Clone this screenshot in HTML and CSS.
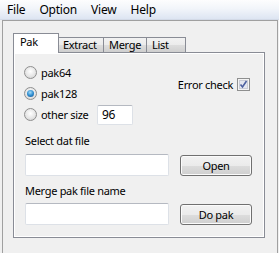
FILE: index.html
```html
<!DOCTYPE html>
<html lang="en">
<head>
    <meta charset="UTF-8">
    <title>Pak tool</title>
    <link rel="stylesheet" href="styles.css">
</head>
<body>
    <!-- Menu bar -->
    <div class="menubar">
        <span class="menu-item">File</span>
        <span class="menu-item">Option</span>
        <span class="menu-item">View</span>
        <span class="menu-item">Help</span>
    </div>

    <div class="window">
        <div class="tabstrip">
            <div class="tab tab-pak active">Pak</div>
            <div class="tab tab-extract">Extract</div>
            <div class="tab tab-merge">Merge</div>
            <div class="tab tab-list">List</div>
        </div>

        <div class="panel">
            <div class="options">
                <div class="radios">
                    <div class="radio-row">
                        <span class="radio"></span>
                        <span class="radio-label">pak64</span>
                    </div>
                    <div class="radio-row">
                        <span class="radio checked"></span>
                        <span class="radio-label">pak128</span>
                    </div>
                    <div class="radio-row">
                        <span class="radio"></span>
                        <span class="radio-label size-label">other size</span>
                        <div class="textbox small">96</div>
                    </div>
                </div>

                <div class="errcheck">
                    <span>Error check</span>
                    <svg class="checkbox" width="13" height="13" viewBox="0 0 13 13">
                        <rect x="0.5" y="0.5" width="12" height="12" fill="#f4f4f4" stroke="#8e8f8f"/>
                        <rect x="2.5" y="2.5" width="8" height="8" fill="#e4e7ef" stroke="#c9ccd6"/>
                        <path d="M3.5 6.5 L5.5 9 L9.5 3" fill="none" stroke="#4d61a0" stroke-width="1.6"/>
                    </svg>
                </div>
            </div>

            <div class="field-label first">Select dat file</div>
            <div class="field-row">
                <div class="textbox wide"></div>
                <button class="btn">Open</button>
            </div>

            <div class="field-label">Merge pak file name</div>
            <div class="field-row">
                <div class="textbox wide"></div>
                <button class="btn">Do pak</button>
            </div>
        </div>
    </div>
</body>
</html>
```

FILE: styles.css
```css
body {
    margin: 0;
    width: 279px;
    height: 253px;
    overflow: hidden;
    background: #f0f0f0;
    font-family: "Noto Sans", "Open Sans", sans-serif;
    font-size: 11px;
    letter-spacing: -0.3px;
    color: #000;
}

/* Menu bar */
.menubar {
    display: flex;
    height: 19px;
    line-height: 19px;
    background: linear-gradient(to bottom, #fdfdfe 0%, #f2f5fa 45%, #dde5f2 100%);
    border-bottom: 1px solid #d3dae7;
    font-size: 12px;
    letter-spacing: -0.2px;
}

.menu-item {
    padding: 0 7px;
}

/* Window frame */
.window {
    margin: 0 1px 0 2px;
    height: 232px;
    border: 1px solid #a0a0a0;
    border-bottom: none;
    padding: 12px 0 0 10px;
}

.tabstrip {
    display: flex;
    align-items: flex-end;
    height: 19px;
}

.tab {
    box-sizing: border-box;
    height: 15px;
    line-height: 13px;
    border: 1px solid #898c95;
    border-bottom: none;
    margin-left: -1px;
    background: linear-gradient(to bottom, #f2f2f2 0%, #ebebeb 50%, #dddddd 51%, #cfcfcf 100%);
    white-space: nowrap;
}

.tab.active {
    position: relative;
    z-index: 1;
    height: 20px;
    margin-left: 0;
    margin-bottom: -1px;
    line-height: 16px;
    background: #ffffff;
}

.tab-pak { width: 46px; padding-left: 6px; }
.tab-extract { width: 46px; padding-left: 4px; }
.tab-merge { width: 44px; padding-left: 5px; }
.tab-list { width: 40px; padding-left: 5px; }

/* Tab page */
.panel {
    box-sizing: border-box;
    width: 252px;
    height: 186px;
    border: 1px solid #898c95;
    box-shadow: inset 0 0 0 1px #ffffff;
    background: #f0f0f0;
    padding: 9px 0 0 10px;
}

.options {
    display: flex;
}

.radios {
    display: flex;
    flex-direction: column;
}

.radio-row {
    display: flex;
    align-items: center;
    height: 21px;
}

.radio {
    box-sizing: border-box;
    width: 13px;
    height: 13px;
    border-radius: 50%;
    border: 1px solid #8f8f8f;
    background: radial-gradient(circle at 50% 40%, #ffffff 0%, #e6e6e6 55%, #cdcdcd 100%);
    margin-right: 4px;
    display: flex;
    align-items: center;
    justify-content: center;
}

.radio.checked::after {
    content: "";
    width: 7px;
    height: 7px;
    border-radius: 50%;
    background: radial-gradient(circle at 45% 35%, #a6dcf8 0%, #2f8ed1 50%, #1a4f86 100%);
}

.size-label {
    width: 56px;
}

.errcheck {
    display: flex;
    align-items: center;
    height: 13px;
    margin: 16px 0 0 auto;
    padding-right: 14px;
}

.checkbox {
    margin-left: 4px;
}

.textbox {
    box-sizing: border-box;
    background: #ffffff;
    border: 1px solid #dde1e7;
    border-top-color: #b5b9c1;
    border-radius: 2px;
}

.textbox.small {
    width: 36px;
    height: 20px;
    line-height: 18px;
    padding-left: 4px;
    font-size: 12px;
}

.textbox.wide {
    width: 144px;
    height: 22px;
    margin-left: 1px;
}

.field-label {
    height: 15px;
    line-height: 15px;
    padding-left: 1px;
    margin-top: 7px;
}

.field-label.first {
    margin-top: 8px;
}

.field-row {
    display: flex;
    align-items: center;
    margin-top: 5px;
}

.field-label.first + .field-row {
    margin-top: 6px;
}

.btn {
    box-sizing: border-box;
    width: 72px;
    height: 21px;
    margin-left: 11px;
    padding: 0;
    font-family: inherit;
    font-size: 11px;
    letter-spacing: -0.3px;
    color: #000;
    border: 1px solid #707070;
    border-radius: 3px;
    background: linear-gradient(to bottom, #f2f2f2 0%, #ebebeb 50%, #dddddd 51%, #cfcfcf 100%);
    box-shadow: inset 0 0 0 1px #fbfbfb;
}
```
